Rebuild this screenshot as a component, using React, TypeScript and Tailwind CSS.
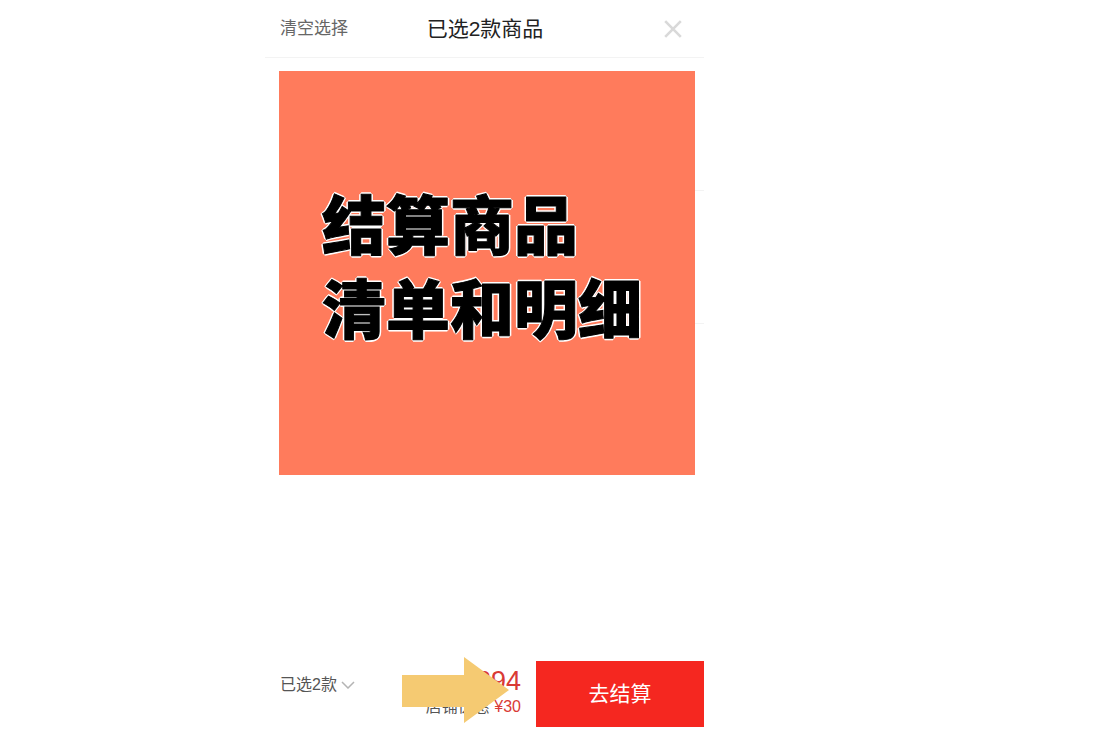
import React from 'react';

function CloseIcon() {
  return (
    <svg viewBox="0 0 18 18" className="size-[18px]" fill="none" stroke="#d9d9d9" strokeWidth="2.6" aria-hidden="true">
      <path d="M1.2 1.2 16.8 16.8M16.8 1.2 1.2 16.8" />
    </svg>
  );
}

function ChevronIcon() {
  return (
    <svg viewBox="0 0 14 8" className="h-2 w-3.5" fill="none" stroke="#b4b4b4" strokeWidth="1.5" aria-hidden="true">
      <path d="M1 1 7 7 13 1" />
    </svg>
  );
}

function Arrow() {
  return (
    <svg
      viewBox="0 0 107 66"
      className="pointer-events-none absolute right-[27px] bottom-1 h-[66px] w-[107px]"
      aria-hidden="true"
    >
      <path d="M0 18H62V0L107 33 62 66V50H0Z" fill="#f5ca72" />
    </svg>
  );
}

export default function App() {
  return (
    <div className="grid min-h-screen grid-cols-[265fr_439fr_389fr] bg-white font-['Liberation_Sans','Noto_Sans_CJK_SC',sans-serif]">
      <main className="col-start-2 flex flex-col pb-0.5">
        <header className="grid h-[58px] grid-cols-[1fr_auto_1fr] items-center border-b border-[#f3f3f3] pr-[22px] pl-[15px]">
          <button type="button" className="justify-self-start text-[17px] leading-6 text-[#666]">
            清空选择
          </button>
          <h1 className="pl-2 text-[21px] leading-7 text-[#222]">已选2款商品</h1>
          <button type="button" aria-label="关闭" className="justify-self-end">
            <CloseIcon />
          </button>
        </header>

        <section className="relative flex-1">
          <ul className="ml-3.5">
            <li className="h-[133px] border-b border-[#f3f3f3]" />
            <li className="h-[133px] border-b border-[#f3f3f3]" />
          </ul>
          <div className="absolute top-[13px] right-[9px] left-3.5 h-[404px] bg-[#ff7b5c] pt-[108px] pl-[43px]">
            <h2 className="font-['Noto_Sans_CJK_SC',sans-serif] text-[64px] leading-[84px] font-black whitespace-nowrap text-black [-webkit-text-stroke:1px_#000] [text-shadow:2px_0_#fff,-2px_0_#fff,0_2px_#fff,0_-2px_#fff,1px_1px_#fff,-1px_1px_#fff,1px_-1px_#fff,-1px_-1px_#fff]">
              结算商品
              <br />
              清单和明细
            </h2>
          </div>
        </section>

        <footer className="flex h-[66px] items-stretch">
          <button type="button" className="ml-[15px] flex h-12 items-center gap-1 text-[16px] leading-6 text-[#555]">
            已选2款
            <ChevronIcon />
          </button>
          <div className="relative flex flex-1 flex-col items-end pt-1 pr-[15px]">
            <p className="flex h-8 items-center text-[27px] leading-8 text-[#d93a35]">
              <span className="text-[16px]">¥</span>294
            </p>
            <p className="h-5 text-[16px] leading-5 whitespace-nowrap text-[#d93a35]">
              <span className="text-[#555]">店铺优惠</span> ¥30
            </p>
            <Arrow />
          </div>
          <button type="button" className="w-[168px] bg-[#f52720] text-[21px] leading-7 text-white">
            去结算
          </button>
        </footer>
      </main>
    </div>
  );
}
